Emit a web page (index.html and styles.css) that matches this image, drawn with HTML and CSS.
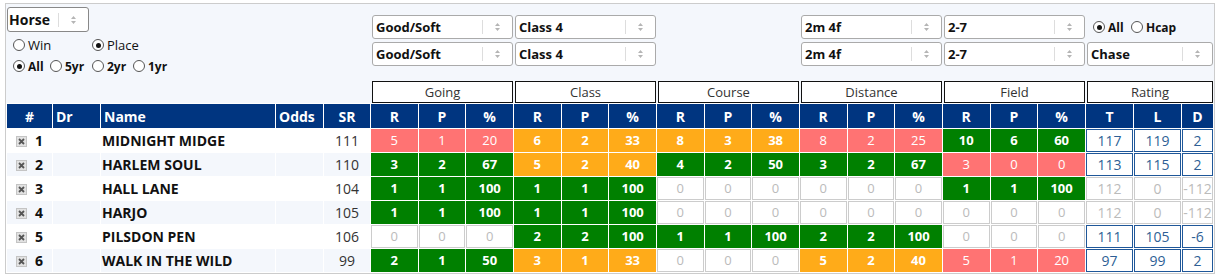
FILE: index.html
```html
<!DOCTYPE html>
<html lang="en">
<head>
    <meta charset="UTF-8">
    <meta name="viewport" content="width=device-width, initial-scale=1.0">
    <title>Runners</title>
    <link rel="stylesheet" href="styles.css">
</head>
<body>
<div class="board">
    <div class="filters">
        <div class="filter-main">
            <div class="select horse"><span>Horse</span><i class="sep"></i><span class="arrows"><svg width="7" height="10" viewBox="0 0 7 10"><path d="M1 4 L3.5 1 L6 4 Z M1 6 L3.5 9 L6 6 Z" fill="#b5b5b5"/></svg></span></div>
            <div class="radio-row first">
                <label class="radio r-win"><span class="dot"></span>Win</label>
                <label class="radio"><span class="dot on"></span>Place</label>
            </div>
            <div class="radio-row small">
                <label class="radio r-all"><span class="dot on"></span>All</label>
                <label class="radio r-5yr"><span class="dot"></span>5yr</label>
                <label class="radio r-2yr"><span class="dot"></span>2yr</label>
                <label class="radio"><span class="dot"></span>1yr</label>
            </div>
        </div>

        <div class="group">
            <div class="select"><span>Good/Soft</span><i class="sep"></i><span class="arrows"><svg width="7" height="10" viewBox="0 0 7 10"><path d="M1 4 L3.5 1 L6 4 Z M1 6 L3.5 9 L6 6 Z" fill="#b5b5b5"/></svg></span></div>
            <div class="select"><span>Good/Soft</span><i class="sep"></i><span class="arrows"><svg width="7" height="10" viewBox="0 0 7 10"><path d="M1 4 L3.5 1 L6 4 Z M1 6 L3.5 9 L6 6 Z" fill="#b5b5b5"/></svg></span></div>
            <div class="group-title">Going</div>
        </div>
        <div class="group">
            <div class="select"><span>Class 4</span><i class="sep"></i><span class="arrows"><svg width="7" height="10" viewBox="0 0 7 10"><path d="M1 4 L3.5 1 L6 4 Z M1 6 L3.5 9 L6 6 Z" fill="#b5b5b5"/></svg></span></div>
            <div class="select"><span>Class 4</span><i class="sep"></i><span class="arrows"><svg width="7" height="10" viewBox="0 0 7 10"><path d="M1 4 L3.5 1 L6 4 Z M1 6 L3.5 9 L6 6 Z" fill="#b5b5b5"/></svg></span></div>
            <div class="group-title">Class</div>
        </div>
        <div class="group">
            <div class="group-title">Course</div>
        </div>
        <div class="group">
            <div class="select"><span>2m 4f</span><i class="sep"></i><span class="arrows"><svg width="7" height="10" viewBox="0 0 7 10"><path d="M1 4 L3.5 1 L6 4 Z M1 6 L3.5 9 L6 6 Z" fill="#b5b5b5"/></svg></span></div>
            <div class="select"><span>2m 4f</span><i class="sep"></i><span class="arrows"><svg width="7" height="10" viewBox="0 0 7 10"><path d="M1 4 L3.5 1 L6 4 Z M1 6 L3.5 9 L6 6 Z" fill="#b5b5b5"/></svg></span></div>
            <div class="group-title">Distance</div>
        </div>
        <div class="group">
            <div class="select"><span>2-7</span><i class="sep"></i><span class="arrows"><svg width="7" height="10" viewBox="0 0 7 10"><path d="M1 4 L3.5 1 L6 4 Z M1 6 L3.5 9 L6 6 Z" fill="#b5b5b5"/></svg></span></div>
            <div class="select"><span>2-7</span><i class="sep"></i><span class="arrows"><svg width="7" height="10" viewBox="0 0 7 10"><path d="M1 4 L3.5 1 L6 4 Z M1 6 L3.5 9 L6 6 Z" fill="#b5b5b5"/></svg></span></div>
            <div class="group-title">Field</div>
        </div>
        <div class="group rating-group">
            <div class="radio-row race-type">
                <label class="radio r-hall"><span class="dot on"></span>All</label>
                <label class="radio"><span class="dot"></span>Hcap</label>
            </div>
            <div class="select"><span>Chase</span><i class="sep"></i><span class="arrows"><svg width="7" height="10" viewBox="0 0 7 10"><path d="M1 4 L3.5 1 L6 4 Z M1 6 L3.5 9 L6 6 Z" fill="#b5b5b5"/></svg></span></div>
            <div class="group-title">Rating</div>
        </div>
    </div>

    <table class="runners">
        <colgroup>
            <col class="c-num"><col class="c-dr"><col class="c-name"><col class="c-odds"><col class="c-sr">
            <col><col><col><col><col><col><col><col><col><col><col><col><col><col><col>
            <col class="c-t"><col class="c-l"><col class="c-d">
        </colgroup>
        <thead>
            <tr>
                <th>#</th><th class="left">Dr</th><th class="left">Name</th><th class="left odds">Odds</th><th>SR</th>
                <th>R</th><th>P</th><th>%</th>
                <th>R</th><th>P</th><th>%</th>
                <th>R</th><th>P</th><th>%</th>
                <th>R</th><th>P</th><th>%</th>
                <th>R</th><th>P</th><th>%</th>
                <th>T</th><th>L</th><th>D</th>
            </tr>
        </thead>
        <tbody>
            <tr>
                <td class="info num"><span class="remove"><svg width="11" height="11" viewBox="0 0 11 11"><rect x="0.5" y="0.5" width="10" height="10" fill="#e2e2e2" stroke="#c4c4c4"/><path d="M3 3 L8 8 M8 3 L3 8" stroke="#555" stroke-width="1.8"/></svg></span>1</td>
                <td class="info"></td><td class="info name">MIDNIGHT MIDGE</td><td class="info"></td><td class="info sr">111</td>
                <td class="s red">5</td><td class="s red">1</td><td class="s red">20</td>
                <td class="s amber">6</td><td class="s amber">2</td><td class="s amber">33</td>
                <td class="s amber">8</td><td class="s amber">3</td><td class="s amber">38</td>
                <td class="s red">8</td><td class="s red">2</td><td class="s red">25</td>
                <td class="s green">10</td><td class="s green">6</td><td class="s green">60</td>
                <td class="s rate">117</td><td class="s rate">119</td><td class="s rate">2</td>
            </tr>
            <tr>
                <td class="info num"><span class="remove"><svg width="11" height="11" viewBox="0 0 11 11"><rect x="0.5" y="0.5" width="10" height="10" fill="#e2e2e2" stroke="#c4c4c4"/><path d="M3 3 L8 8 M8 3 L3 8" stroke="#555" stroke-width="1.8"/></svg></span>2</td>
                <td class="info"></td><td class="info name">HARLEM SOUL</td><td class="info"></td><td class="info sr">110</td>
                <td class="s green">3</td><td class="s green">2</td><td class="s green">67</td>
                <td class="s amber">5</td><td class="s amber">2</td><td class="s amber">40</td>
                <td class="s green">4</td><td class="s green">2</td><td class="s green">50</td>
                <td class="s green">3</td><td class="s green">2</td><td class="s green">67</td>
                <td class="s red">3</td><td class="s red">0</td><td class="s red">0</td>
                <td class="s rate">113</td><td class="s rate">115</td><td class="s rate">2</td>
            </tr>
            <tr>
                <td class="info num"><span class="remove"><svg width="11" height="11" viewBox="0 0 11 11"><rect x="0.5" y="0.5" width="10" height="10" fill="#e2e2e2" stroke="#c4c4c4"/><path d="M3 3 L8 8 M8 3 L3 8" stroke="#555" stroke-width="1.8"/></svg></span>3</td>
                <td class="info"></td><td class="info name">HALL LANE</td><td class="info"></td><td class="info sr">104</td>
                <td class="s green">1</td><td class="s green">1</td><td class="s green">100</td>
                <td class="s green">1</td><td class="s green">1</td><td class="s green">100</td>
                <td class="s zero">0</td><td class="s zero">0</td><td class="s zero">0</td>
                <td class="s zero">0</td><td class="s zero">0</td><td class="s zero">0</td>
                <td class="s green">1</td><td class="s green">1</td><td class="s green">100</td>
                <td class="s zero big">112</td><td class="s zero big">0</td><td class="s zero big">-112</td>
            </tr>
            <tr>
                <td class="info num"><span class="remove"><svg width="11" height="11" viewBox="0 0 11 11"><rect x="0.5" y="0.5" width="10" height="10" fill="#e2e2e2" stroke="#c4c4c4"/><path d="M3 3 L8 8 M8 3 L3 8" stroke="#555" stroke-width="1.8"/></svg></span>4</td>
                <td class="info"></td><td class="info name">HARJO</td><td class="info"></td><td class="info sr">105</td>
                <td class="s green">1</td><td class="s green">1</td><td class="s green">100</td>
                <td class="s green">1</td><td class="s green">1</td><td class="s green">100</td>
                <td class="s zero">0</td><td class="s zero">0</td><td class="s zero">0</td>
                <td class="s zero">0</td><td class="s zero">0</td><td class="s zero">0</td>
                <td class="s zero">0</td><td class="s zero">0</td><td class="s zero">0</td>
                <td class="s zero big">112</td><td class="s zero big">0</td><td class="s zero big">-112</td>
            </tr>
            <tr>
                <td class="info num"><span class="remove"><svg width="11" height="11" viewBox="0 0 11 11"><rect x="0.5" y="0.5" width="10" height="10" fill="#e2e2e2" stroke="#c4c4c4"/><path d="M3 3 L8 8 M8 3 L3 8" stroke="#555" stroke-width="1.8"/></svg></span>5</td>
                <td class="info"></td><td class="info name">PILSDON PEN</td><td class="info"></td><td class="info sr">106</td>
                <td class="s zero">0</td><td class="s zero">0</td><td class="s zero">0</td>
                <td class="s green">2</td><td class="s green">2</td><td class="s green">100</td>
                <td class="s green">1</td><td class="s green">1</td><td class="s green">100</td>
                <td class="s green">2</td><td class="s green">2</td><td class="s green">100</td>
                <td class="s zero">0</td><td class="s zero">0</td><td class="s zero">0</td>
                <td class="s rate">111</td><td class="s rate">105</td><td class="s rate">-6</td>
            </tr>
            <tr>
                <td class="info num"><span class="remove"><svg width="11" height="11" viewBox="0 0 11 11"><rect x="0.5" y="0.5" width="10" height="10" fill="#e2e2e2" stroke="#c4c4c4"/><path d="M3 3 L8 8 M8 3 L3 8" stroke="#555" stroke-width="1.8"/></svg></span>6</td>
                <td class="info"></td><td class="info name">WALK IN THE WILD</td><td class="info"></td><td class="info sr">99</td>
                <td class="s green">2</td><td class="s green">1</td><td class="s green">50</td>
                <td class="s amber">3</td><td class="s amber">1</td><td class="s amber">33</td>
                <td class="s zero">0</td><td class="s zero">0</td><td class="s zero">0</td>
                <td class="s amber">5</td><td class="s amber">2</td><td class="s amber">40</td>
                <td class="s red">5</td><td class="s red">1</td><td class="s red">20</td>
                <td class="s rate">97</td><td class="s rate">99</td><td class="s rate">2</td>
            </tr>
        </tbody>
    </table>
</div>
</body>
</html>
```

FILE: styles.css
```css
body {
    margin: 0;
    font-family: "Open Sans", "Noto Sans", sans-serif;
    color: #111;
}
.board {
    box-sizing: border-box;
    width: 1210px;
    margin: 3px 0 0 5px;
    border: 1px solid #ccc;
    background-color: #f4f7fc;
}

/* filters */
.filters {
    display: grid;
    grid-template-columns: 365px repeat(5, 143px) 128px;
    height: 99px;
}
.filter-main {
    padding: 3px 0 0 1px;
}
.group {
    display: flex;
    flex-direction: column;
    padding: 11px 0 0 1px;
}
.group .select {
    width: 141px;
    margin-bottom: 3px;
}
.group-title {
    box-sizing: border-box;
    width: 141px;
    height: 22px;
    margin-top: auto;
    border: 1px solid #111;
    background-color: #fff;
    text-align: center;
    font-size: 13px;
    line-height: 20px;
    color: #333;
}
.rating-group .select,
.rating-group .group-title {
    width: 126px;
}
.select {
    box-sizing: border-box;
    display: flex;
    align-items: center;
    height: 24px;
    padding-left: 3px;
    border: 1px solid #aaa;
    border-radius: 3px;
    background-color: #fff;
    font-size: 13px;
    font-weight: bold;
}
.select .sep {
    width: 1px;
    height: 14px;
    margin-left: auto;
    background-color: #ddd;
}
.select .arrows {
    display: flex;
    justify-content: center;
    width: 29px;
}
.select.horse {
    width: 82px;
    height: 25px;
    padding-left: 1px;
    border-color: #888;
    font-size: 14px;
}

/* radios */
.radio-row {
    display: flex;
    align-items: center;
    height: 18px;
    padding-left: 6px;
    font-size: 13px;
}
.radio-row.first {
    margin-top: 4px;
}
.radio-row.small {
    margin-top: 3px;
    font-size: 12px;
    font-weight: bold;
}
.radio-row.race-type {
    height: 24px;
    margin-bottom: 3px;
    font-size: 12px;
    font-weight: bold;
}
.radio {
    display: inline-flex;
    align-items: center;
}
.dot {
    box-sizing: border-box;
    display: flex;
    align-items: center;
    justify-content: center;
    width: 12px;
    height: 12px;
    margin-right: 3px;
    border: 1px solid #555;
    border-radius: 50%;
    background-color: #fff;
}
.dot.on::after {
    content: "";
    width: 5px;
    height: 5px;
    border-radius: 50%;
    background-color: #111;
}
.r-win { width: 79px; }
.r-all { width: 37px; }
.r-5yr { width: 42px; }
.r-2yr { width: 41px; }
.r-hall { width: 38px; }

/* table */
.runners {
    width: 1208px;
    table-layout: fixed;
    border-collapse: separate;
    border-spacing: 1px;
    background-color: #fff;
    font-size: 14px;
}
.c-num { width: 45px; }
.c-dr { width: 47px; }
.c-name { width: 174px; }
.c-odds { width: 47px; }
.c-sr { width: 46px; }
.c-t { width: 47px; }
.c-l { width: 47px; }
.c-d { width: 31px; }
.runners th {
    height: 24px;
    padding: 0;
    background-color: #003580;
    color: #fff;
    font-size: 14px;
    font-weight: bold;
}
.runners th.left {
    text-align: left;
    padding-left: 3px;
}
.runners tbody tr {
    height: 23px;
}
.runners td {
    box-sizing: border-box;
    height: 23px;
    padding: 0;
    border: 1px solid transparent;
    white-space: nowrap;
    line-height: 19px;
}
.runners td.info {
    background-color: #fff;
}
.runners tbody tr:nth-child(even) td.info {
    background-color: #f4f7fc;
}
.num {
    padding-left: 8px !important;
    font-weight: bold;
}
.remove {
    display: inline-block;
    width: 11px;
    height: 11px;
    margin-right: 8px;
    vertical-align: -1px;
}
.remove svg {
    display: block;
}
.name {
    font-weight: bold;
}
.sr {
    text-align: center;
    color: #333;
}
.s {
    text-align: center;
    font-size: 13px;
    font-weight: bold;
    color: #fff;
    overflow: visible;
}
.red {
    background-color: #ff7373;
    border-color: #ff7373 !important;
    font-weight: normal;
}
.amber {
    background-color: #ffab19;
    border-color: #ffab19 !important;
}
.green {
    background-color: #008000;
    border-color: #008000 !important;
}
.zero {
    background-color: #fff;
    border-color: #ccc !important;
    color: #bbb;
    font-weight: normal;
}
.rate {
    background-color: #fff;
    border-color: #1f5799 !important;
    color: #2e5f96;
    font-weight: normal;
    font-size: 14px;
}
.big {
    font-size: 14px;
}
```
